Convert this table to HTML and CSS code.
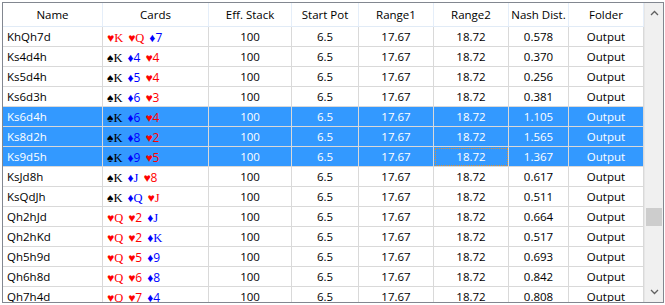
FILE: index.html
```html
<!DOCTYPE html>
<html lang="en">
<head>
    <meta charset="UTF-8">
    <title>Results</title>
    <link rel="stylesheet" href="styles.css">
</head>
<body>
    <div class="grid">
        <div class="table">
            <div class="row head">
                <div class="cell">Name</div>
                <div class="cell">Cards</div>
                <div class="cell">Eff. Stack</div>
                <div class="cell">Start Pot</div>
                <div class="cell">Range1</div>
                <div class="cell">Range2</div>
                <div class="cell">Nash Dist.</div>
                <div class="cell">Folder</div>
            </div>
            <div class="row">
                <div class="cell name">KhQh7d</div>
                <div class="cell cards"><span class="h">♥<b>K</b></span><span class="h">♥<b>Q</b></span><span class="d">♦7</span></div>
                <div class="cell">100</div><div class="cell">6.5</div><div class="cell">17.67</div><div class="cell">18.72</div>
                <div class="cell">0.578</div><div class="cell">Output</div>
            </div>
            <div class="row">
                <div class="cell name">Ks4d4h</div>
                <div class="cell cards"><span class="s">♠<b>K</b></span><span class="d">♦4</span><span class="h">♥4</span></div>
                <div class="cell">100</div><div class="cell">6.5</div><div class="cell">17.67</div><div class="cell">18.72</div>
                <div class="cell">0.370</div><div class="cell">Output</div>
            </div>
            <div class="row">
                <div class="cell name">Ks5d4h</div>
                <div class="cell cards"><span class="s">♠<b>K</b></span><span class="d">♦5</span><span class="h">♥4</span></div>
                <div class="cell">100</div><div class="cell">6.5</div><div class="cell">17.67</div><div class="cell">18.72</div>
                <div class="cell">0.256</div><div class="cell">Output</div>
            </div>
            <div class="row">
                <div class="cell name">Ks6d3h</div>
                <div class="cell cards"><span class="s">♠<b>K</b></span><span class="d">♦6</span><span class="h">♥3</span></div>
                <div class="cell">100</div><div class="cell">6.5</div><div class="cell">17.67</div><div class="cell">18.72</div>
                <div class="cell">0.381</div><div class="cell">Output</div>
            </div>
            <div class="row selected">
                <div class="cell name">Ks6d4h</div>
                <div class="cell cards"><span class="s">♠<b>K</b></span><span class="d">♦6</span><span class="h">♥4</span></div>
                <div class="cell">100</div><div class="cell">6.5</div><div class="cell">17.67</div><div class="cell">18.72</div>
                <div class="cell">1.105</div><div class="cell">Output</div>
            </div>
            <div class="row selected">
                <div class="cell name">Ks8d2h</div>
                <div class="cell cards"><span class="s">♠<b>K</b></span><span class="d">♦8</span><span class="h">♥2</span></div>
                <div class="cell">100</div><div class="cell">6.5</div><div class="cell">17.67</div><div class="cell">18.72</div>
                <div class="cell">1.565</div><div class="cell">Output</div>
            </div>
            <div class="row selected">
                <div class="cell name">Ks9d5h</div>
                <div class="cell cards"><span class="s">♠<b>K</b></span><span class="d">♦9</span><span class="h">♥5</span></div>
                <div class="cell">100</div><div class="cell">6.5</div><div class="cell">17.67</div><div class="cell focus">18.72</div>
                <div class="cell">1.367</div><div class="cell">Output</div>
            </div>
            <div class="row">
                <div class="cell name">KsJd8h</div>
                <div class="cell cards"><span class="s">♠<b>K</b></span><span class="d">♦<b>J</b></span><span class="h">♥8</span></div>
                <div class="cell">100</div><div class="cell">6.5</div><div class="cell">17.67</div><div class="cell">18.72</div>
                <div class="cell">0.617</div><div class="cell">Output</div>
            </div>
            <div class="row">
                <div class="cell name">KsQdJh</div>
                <div class="cell cards"><span class="s">♠<b>K</b></span><span class="d">♦<b>Q</b></span><span class="h">♥<b>J</b></span></div>
                <div class="cell">100</div><div class="cell">6.5</div><div class="cell">17.67</div><div class="cell">18.72</div>
                <div class="cell">0.511</div><div class="cell">Output</div>
            </div>
            <div class="row">
                <div class="cell name">Qh2hJd</div>
                <div class="cell cards"><span class="h">♥<b>Q</b></span><span class="h">♥2</span><span class="d">♦<b>J</b></span></div>
                <div class="cell">100</div><div class="cell">6.5</div><div class="cell">17.67</div><div class="cell">18.72</div>
                <div class="cell">0.664</div><div class="cell">Output</div>
            </div>
            <div class="row">
                <div class="cell name">Qh2hKd</div>
                <div class="cell cards"><span class="h">♥<b>Q</b></span><span class="h">♥2</span><span class="d">♦<b>K</b></span></div>
                <div class="cell">100</div><div class="cell">6.5</div><div class="cell">17.67</div><div class="cell">18.72</div>
                <div class="cell">0.517</div><div class="cell">Output</div>
            </div>
            <div class="row">
                <div class="cell name">Qh5h9d</div>
                <div class="cell cards"><span class="h">♥<b>Q</b></span><span class="h">♥5</span><span class="d">♦9</span></div>
                <div class="cell">100</div><div class="cell">6.5</div><div class="cell">17.67</div><div class="cell">18.72</div>
                <div class="cell">0.693</div><div class="cell">Output</div>
            </div>
            <div class="row">
                <div class="cell name">Qh6h8d</div>
                <div class="cell cards"><span class="h">♥<b>Q</b></span><span class="h">♥6</span><span class="d">♦8</span></div>
                <div class="cell">100</div><div class="cell">6.5</div><div class="cell">17.67</div><div class="cell">18.72</div>
                <div class="cell">0.842</div><div class="cell">Output</div>
            </div>
            <div class="row">
                <div class="cell name">Qh7h4d</div>
                <div class="cell cards"><span class="h">♥<b>Q</b></span><span class="h">♥7</span><span class="d">♦4</span></div>
                <div class="cell">100</div><div class="cell">6.5</div><div class="cell">17.67</div><div class="cell">18.72</div>
                <div class="cell">0.808</div><div class="cell">Output</div>
            </div>
        </div>
        <div class="scrollbar">
            <div class="arrow">
                <svg width="9" height="6" viewBox="0 0 9 6"><path d="M1 5 L4.5 1.5 L8 5" fill="none" stroke="#606060" stroke-width="1.3"/></svg>
            </div>
            <div class="track">
                <div class="thumb"></div>
            </div>
            <div class="arrow">
                <svg width="9" height="6" viewBox="0 0 9 6"><path d="M1 1 L4.5 4.5 L8 1" fill="none" stroke="#606060" stroke-width="1.3"/></svg>
            </div>
        </div>
    </div>
</body>
</html>
```

FILE: styles.css
```css
body {
    margin: 0;
    padding: 0;
    background: #ffffff;
    font-family: 'Open Sans', 'Noto Sans', sans-serif;
    font-size: 11.5px;
    color: #000;
}
.grid {
    margin: 2px 0 0 2px;
    width: 662px;
    height: 301px;
    border: 1px solid #828790;
    box-sizing: border-box;
    display: flex;
    overflow: hidden;
}
.table {
    width: 641px;
    flex-shrink: 0;
}
.row {
    display: grid;
    grid-template-columns: 100px 106px 83px 67px 75px 75px 60px 75px;
    height: 20px;
}
.cell {
    border-right: 1px solid #d9d9d9;
    border-bottom: 1px solid #d9d9d9;
    box-sizing: border-box;
    display: flex;
    align-items: center;
    justify-content: center;
    white-space: nowrap;
    overflow: hidden;
    padding-bottom: 1px;
}
.head {
    height: 24px;
}
.head .cell {
    border-right-color: #e5eef9;
    border-bottom-color: #e1ebf6;
}
.cell.name {
    justify-content: flex-start;
    padding-left: 4px;
}
.cell.cards {
    justify-content: flex-start;
    padding-left: 4px;
    padding-top: 3px;
    font-size: 12px;
    gap: 5px;
}
.cards b {
    font-weight: normal;
    font-family: 'Liberation Serif', serif;
    font-size: 12.5px;
}
.h {
    color: #ff0000;
}
.d {
    color: #0000ff;
}
.s {
    color: #000;
}
.selected {
    background: #3399ff;
}
.selected .cell {
    color: #fff;
}
.selected .cards .h {
    color: #ff0000;
}
.selected .cards .d {
    color: #0000ff;
}
.selected .cards .s {
    color: #000;
}
.cell.focus {
    outline: 1px dotted #d8913a;
    outline-offset: -2px;
}
.scrollbar {
    flex: 1;
    background: #f0f0f0;
    border-left: 1px solid #e6e6e6;
    display: flex;
    flex-direction: column;
}
.arrow {
    height: 20px;
    display: flex;
    align-items: center;
    justify-content: center;
    flex-shrink: 0;
}
.track {
    flex: 1;
    padding: 185px 1px 0 1px;
}
.thumb {
    height: 18px;
    background: #cdcdcd;
}
```
